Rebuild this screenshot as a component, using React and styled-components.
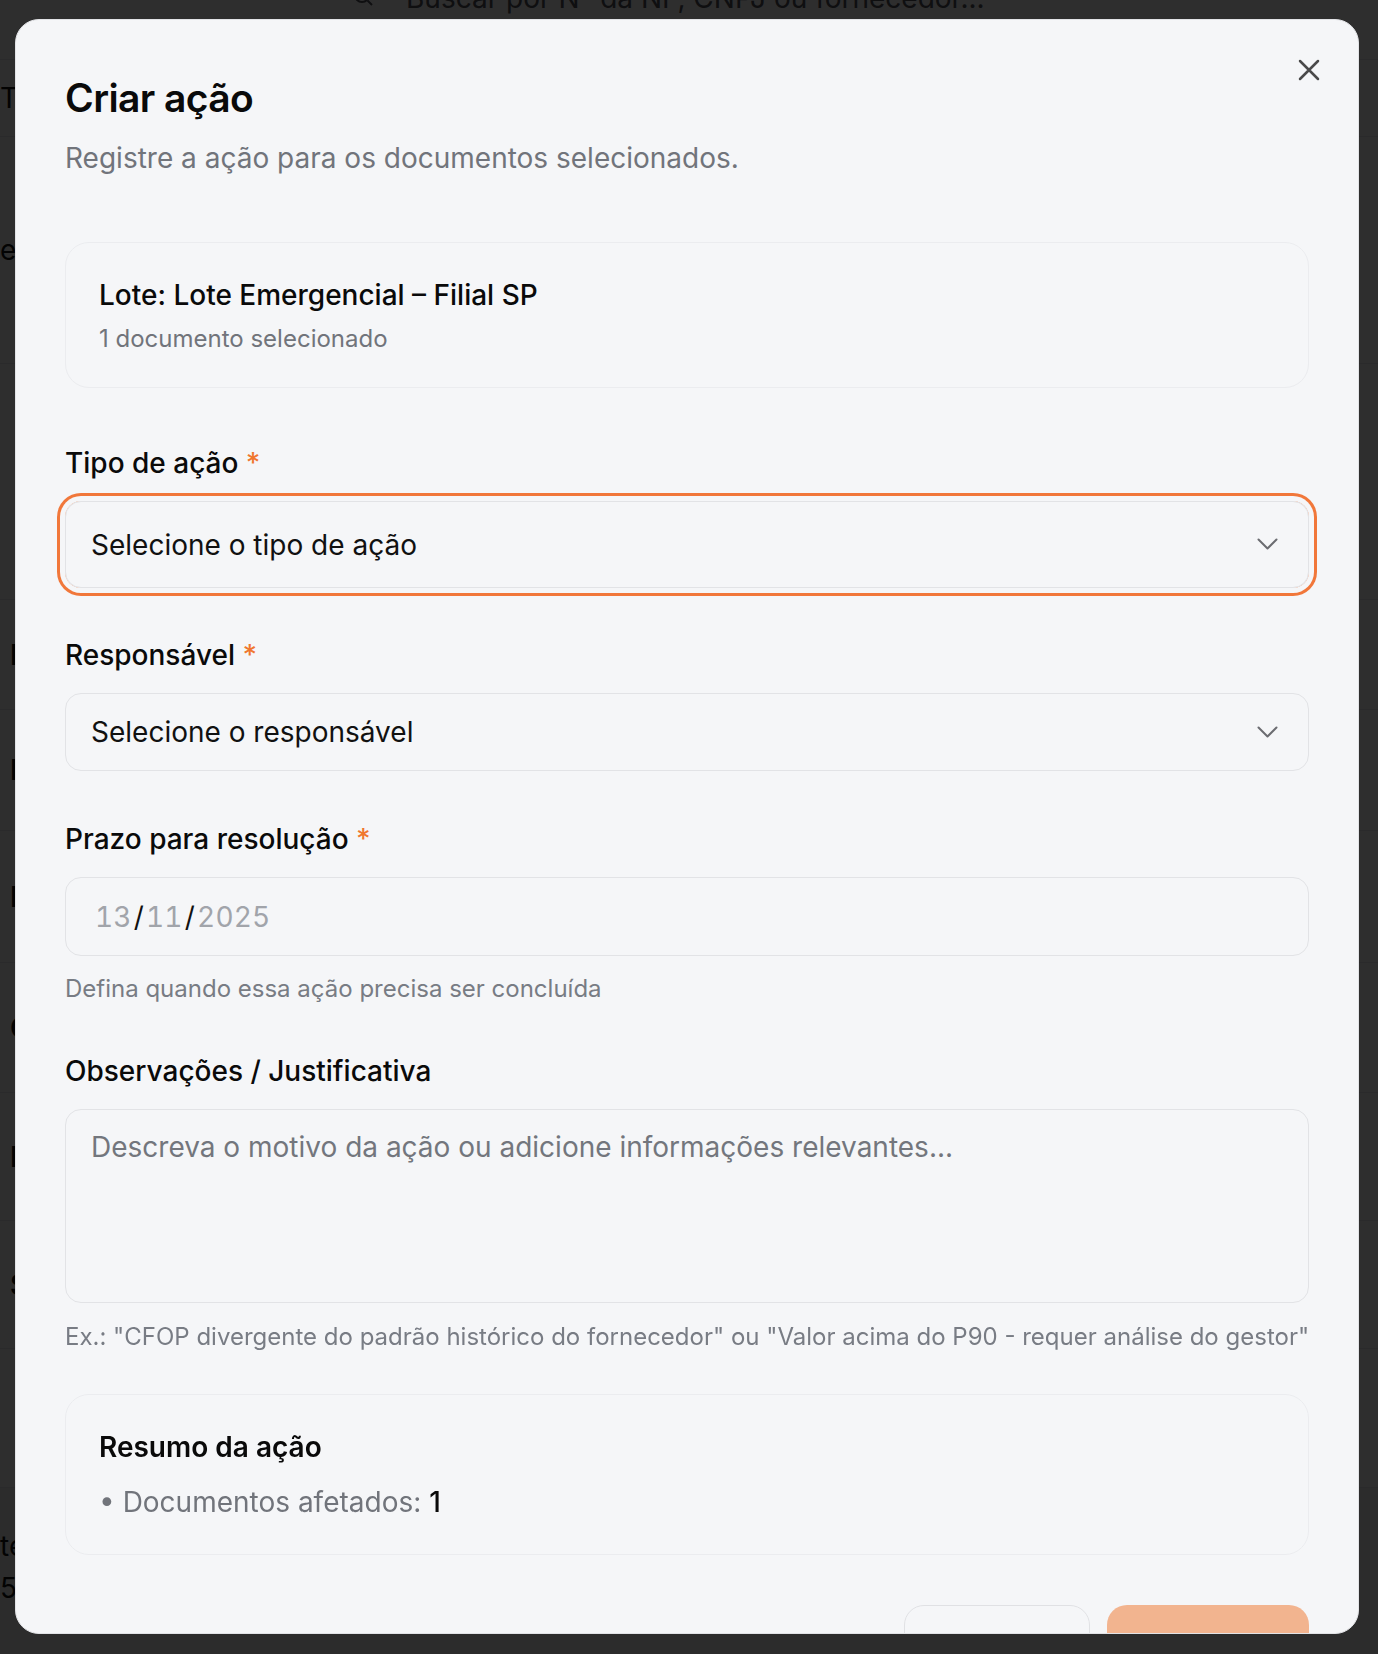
import styled, { createGlobalStyle } from 'styled-components';

const GlobalStyle = createGlobalStyle`
  html, body {
    margin: 0;
    padding: 0;
  }
  body {
    font-family: Inter, "Noto Sans", "Liberation Sans", sans-serif;
    background: #ffffff;
    overflow: hidden;
  }
  * {
    box-sizing: border-box;
  }
`;

/* ---------- page behind the dialog ---------- */

const Page = styled.div`
  width: 1378px;
  height: 1654px;
  overflow: hidden;
  background: #ffffff;
  color: #111111;
  display: flex;
  flex-direction: column;
`;

const TopBar = styled.div`
  height: 60px;
  flex-shrink: 0;
  display: flex;
  align-items: flex-start;
  gap: 31px;
  padding-left: 351px;
  border-bottom: 1px solid #e5e7eb;
`;

const SearchText = styled.span`
  margin-top: -22px;
  font-size: 28px;
  line-height: 40px;
  color: #52525b;
`;

const SearchIcon = styled.svg`
  margin-top: -16px;
  flex-shrink: 0;
`;

const BgRow = styled.div`
  height: ${(p) => p.$h}px;
  flex-shrink: 0;
  display: flex;
  align-items: center;
  padding-left: ${(p) => p.$indent || 0}px;
  font-size: 28px;
  font-weight: ${(p) => (p.$bold ? 600 : 400)};
  border-bottom: 1px solid #e5e7eb;
`;

const FooterStrip = styled.div`
  flex: 1;
  background: #f4f4f5;
  display: flex;
  flex-direction: column;
  padding-top: 37px;
  font-size: 28px;
  line-height: 42px;
  color: #111;
`;

const Overlay = styled.div`
  position: fixed;
  inset: 0;
  background: rgba(0, 0, 0, 0.82);
`;

/* ---------- dialog ---------- */

const Dialog = styled.div`
  position: fixed;
  left: 15px;
  top: 19px;
  width: 1344px;
  height: 1615px;
  background: #f5f6f8;
  border: 1px solid #e2e3e6;
  border-radius: 24px;
  overflow: hidden;
  padding: 50px 49px 0;
  display: flex;
  flex-direction: column;
  color: #0a0a0a;
`;

const CloseButton = styled.button`
  position: absolute;
  top: 37px;
  right: 36px;
  width: 26px;
  height: 26px;
  padding: 0;
  border: none;
  background: transparent;
  display: flex;
  align-items: center;
  justify-content: center;
  color: #4a4a4a;
  cursor: pointer;
`;

const Title = styled.h2`
  margin: 0;
  font-size: 39px;
  line-height: 56px;
  font-weight: 600;
  letter-spacing: -0.6px;
`;

const Subtitle = styled.p`
  margin: 12px 0 0;
  font-size: 28px;
  line-height: 40px;
  color: #71747b;
`;

const Card = styled.div`
  margin-top: ${(p) => p.$mt}px;
  border: 1px solid #ebecef;
  border-radius: 24px;
  padding: 32px 33px;
  display: flex;
  flex-direction: column;
`;

const CardTitle = styled.div`
  font-size: 28px;
  line-height: 40px;
  font-weight: ${(p) => (p.$strong ? 600 : 500)};
  color: #0a0a0a;
`;

const CardMeta = styled.div`
  margin-top: 8px;
  font-size: 24px;
  line-height: 32px;
  color: #71747b;
`;

const Field = styled.div`
  margin-top: ${(p) => p.$mt}px;
  display: flex;
  flex-direction: column;
`;

const Label = styled.label`
  font-size: 28px;
  line-height: 40px;
  font-weight: 500;
  color: #0a0a0a;
  margin-bottom: 18px;
`;

const Required = styled.span`
  color: #f0772f;
`;

const SelectTrigger = styled.button`
  height: ${(p) => p.$h}px;
  width: 100%;
  display: flex;
  align-items: center;
  justify-content: space-between;
  padding: 0 30px 0 25px;
  background: transparent;
  border: 1px solid #e2e3e6;
  border-radius: 16px;
  font-family: inherit;
  font-size: 28px;
  color: #111111;
  text-align: left;
  box-shadow: ${(p) =>
    p.$focused ? '0 0 0 5px #f5f6f8, 0 0 0 8px #f1773a' : 'none'};
`;

const DateBox = styled.div`
  height: 79px;
  display: flex;
  align-items: center;
  padding: 0 29px;
  border: 1px solid #e2e3e6;
  border-radius: 16px;
  font-size: 28px;
  font-variant-numeric: tabular-nums;
  letter-spacing: 0.2px;
  color: #a1a4aa;
`;

const Slash = styled.span`
  color: #111111;
  margin: 0 2px;
`;

const Help = styled.div`
  margin-top: ${(p) => p.$mt}px;
  font-size: 24px;
  line-height: 32px;
  color: #787c84;
  white-space: nowrap;
`;

const TextArea = styled.textarea`
  height: 194px;
  width: 100%;
  resize: none;
  padding: 17px 25px 16px;
  border: 1px solid #e2e3e6;
  border-radius: 16px;
  background: transparent;
  font-family: inherit;
  font-size: 28px;
  line-height: 40px;
  color: #111111;
  outline: none;

  &::placeholder {
    color: #73767d;
  }
`;

const BulletLine = styled.div`
  margin-top: 15px;
  font-size: 28px;
  line-height: 40px;
  color: #71747b;
`;

const Strong = styled.span`
  color: #0a0a0a;
  font-weight: 500;
`;

const Footer = styled.div`
  margin-top: 50px;
  display: flex;
  justify-content: flex-end;
  gap: 17px;
  flex-shrink: 0;
`;

const Button = styled.button`
  height: 80px;
  width: ${(p) => p.$w}px;
  border-radius: 20px;
  font-family: inherit;
  font-size: 28px;
  font-weight: 500;
  border: ${(p) => (p.$primary ? 'none' : '1.5px solid #e0e1e4')};
  background: ${(p) => (p.$primary ? '#f2b48f' : 'transparent')};
  color: ${(p) => (p.$primary ? '#ffffff' : '#111111')};
`;

const Chevron = () => (
  <svg width="21" height="13" viewBox="0 0 21 13" fill="none">
    <polyline
      points="1.5,1.5 10.5,10.5 19.5,1.5"
      stroke="#6b6c71"
      strokeWidth="2"
      strokeLinecap="round"
      strokeLinejoin="round"
    />
  </svg>
);

const bgRows = [
  { h: 77, text: 'T', indent: 0 },
  { h: 227, text: 'e', indent: 0 },
  { h: 236, text: '' },
  { h: 110, text: 'F', indent: 10, bold: true },
  { h: 121, text: 'F', indent: 10, bold: true },
  { h: 132, text: 'D', indent: 10, bold: true },
  { h: 130, text: 'C', indent: 10, bold: true },
  { h: 128, text: 'I', indent: 10, bold: true },
  { h: 128, text: 'S', indent: 10, bold: true },
  { h: 139, text: '' },
];

export default function App() {
  return (
    <>
      <GlobalStyle />
      <Page>
        <TopBar>
          <SearchIcon width="24" height="24" viewBox="0 0 24 24" fill="none" stroke="#52525b" strokeWidth="2">
            <circle cx="11" cy="11" r="7" />
            <line x1="16.5" y1="16.5" x2="21" y2="21" />
          </SearchIcon>
          <SearchText>Buscar por N° da NF, CNPJ ou fornecedor...</SearchText>
        </TopBar>
        {bgRows.map((r, i) => (
          <BgRow key={i} $h={r.h} $indent={r.indent} $bold={r.bold}>
            {r.text}
          </BgRow>
        ))}
        <FooterStrip>
          <span>te</span>
          <span>5</span>
        </FooterStrip>
      </Page>
      <Overlay />
      <Dialog role="dialog">
        <CloseButton aria-label="Fechar">
          <svg width="22" height="22" viewBox="0 0 22 22" fill="none">
            <path d="M2 2 L20 20 M20 2 L2 20" stroke="currentColor" strokeWidth="2.5" strokeLinecap="round" />
          </svg>
        </CloseButton>

        <Title>Criar ação</Title>
        <Subtitle>Registre a ação para os documentos selecionados.</Subtitle>

        <Card $mt={64}>
          <CardTitle>Lote: Lote Emergencial – Filial SP</CardTitle>
          <CardMeta>1 documento selecionado</CardMeta>
        </Card>

        <Field $mt={55}>
          <Label>
            Tipo de ação <Required>*</Required>
          </Label>
          <SelectTrigger $h={87} $focused>
            <span>Selecione o tipo de ação</span>
            <Chevron />
          </SelectTrigger>
        </Field>

        <Field $mt={47}>
          <Label>
            Responsável <Required>*</Required>
          </Label>
          <SelectTrigger $h={78}>
            <span>Selecione o responsável</span>
            <Chevron />
          </SelectTrigger>
        </Field>

        <Field $mt={48}>
          <Label>
            Prazo para resolução <Required>*</Required>
          </Label>
          <DateBox>
            13<Slash>/</Slash>11<Slash>/</Slash>2025
          </DateBox>
          <Help $mt={17}>Defina quando essa ação precisa ser concluída</Help>
        </Field>

        <Field $mt={46}>
          <Label>Observações / Justificativa</Label>
          <TextArea placeholder="Descreva o motivo da ação ou adicione informações relevantes..." />
          <Help $mt={18}>
            Ex.: "CFOP divergente do padrão histórico do fornecedor" ou "Valor acima do P90 - requer análise do gestor"
          </Help>
        </Field>

        <Card $mt={41}>
          <CardTitle $strong>Resumo da ação</CardTitle>
          <BulletLine>
            • Documentos afetados: <Strong>1</Strong>
          </BulletLine>
        </Card>

        <Footer>
          <Button $w={186}>Cancelar</Button>
          <Button $w={202} $primary>Criar ação</Button>
        </Footer>
      </Dialog>
    </>
  );
}
